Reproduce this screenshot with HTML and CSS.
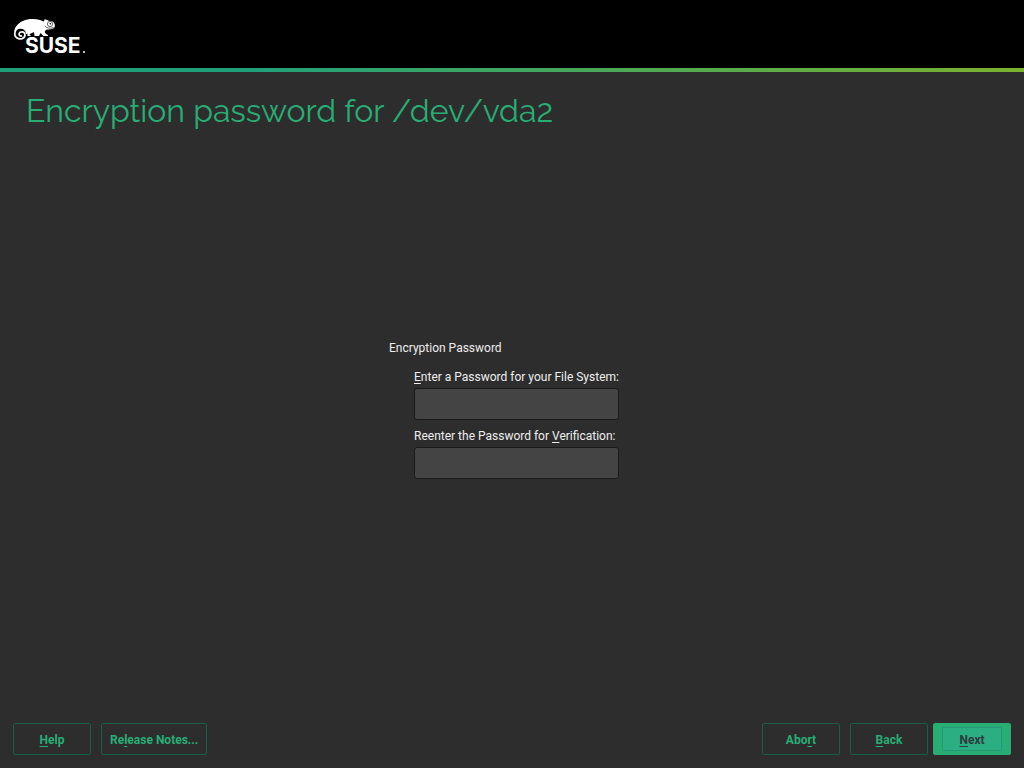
FILE: index.html
```html
<!DOCTYPE html>
<html lang="en">
<head>
<meta charset="utf-8">
<meta name="viewport" content="width=device-width, initial-scale=1">
<title>Encryption password for /dev/vda2</title>
<link rel="stylesheet" href="styles.css">
</head>
<body>
<header class="banner">
  <svg class="logo" width="76" height="38" viewBox="0 0 76 38" role="img" aria-label="SUSE">
    <path class="logo-shape" d="M0 16C0 9 4 5 9 3C14 0.500 21 0.500 26 2C28 2.500 29 3.500 30 3.500L30.500 1.300C32 1.500 33.500 2 34.500 2.800C37 2.800 39.500 3.500 40 5C41.200 6.500 41.200 8.500 40 10C38.500 11.300 35 11.500 33 11.500C30.500 12.500 30 14 32 16L34 17V18H29.500L26.500 15L25 18H20.500L20 14C18 15 16.500 15.500 15.500 16.500L17 18H13.500C14 14 12 11 8 10C3 9 0 13 0 16Z"/>
    <path class="logo-line" d="M13 16C12.500 11.500 9 9.500 6 10C0 10.500-0.500 18 3 20C6.500 22.300 11.300 20 11 16.500C10.500 13.200 6 13.300 5.200 15.500C4.600 17.500 6.600 18.600 8 17.500"/>
    <circle class="logo-eye" cx="36" cy="6" r="2.600"/>
    <circle class="logo-pupil" cx="36.300" cy="5.800" r="0.800"/>
    <path class="logo-mouth" d="M31 8C33 10.300 36 10.800 39.500 9.500"/>
    <text class="logo-text" x="11" y="35">SUSE</text>
    <circle class="logo-shape" cx="70" cy="34" r="1"/>
  </svg>
</header>
<form class="dialog">
  <h1 class="title">Encryption password for /dev/vda2</h1>
  <main class="content">
    <fieldset class="group">
      <legend class="legend">Encryption Password</legend>
      <div class="fields">
        <label class="label" for="password"><u>E</u>nter a Password for your File System:</label>
        <input class="input" id="password" type="password">
        <label class="label" for="verify">Reenter the Password for <u>V</u>erification:</label>
        <input class="input" id="verify" type="password">
      </div>
    </fieldset>
  </main>
  <footer class="actions">
    <div class="help-actions">
      <button class="button" type="button"><u>H</u>elp</button>
      <button class="button" type="button">Re<u>l</u>ease Notes...</button>
    </div>
    <div class="nav-actions">
      <button class="button" type="button">Abo<u>r</u>t</button>
      <div class="step-actions">
        <button class="button" type="button"><u>B</u>ack</button>
        <button class="button primary" type="submit"><span class="focus"><u>N</u>ext</span></button>
      </div>
    </div>
  </footer>
</form>
</body>
</html>
```
FILE: styles.css
```css
* { box-sizing: border-box; }
body {
  display: flex;
  flex-direction: column;
  min-height: 100vh;
  margin: 0;
  background: #2d2d2d;
  color: #eeeeee;
  font: 12px/16px Roboto, sans-serif;
}
u {
  text-decoration: underline 1px;
  text-underline-offset: 2px;
  text-decoration-skip-ink: none;
}
.banner {
  padding: 18px 14px 12px;
  background: #000;
  border-bottom: 4px solid;
  border-image: linear-gradient(to right, #21a179 0%, #21a179 25%, #7bb22f 100%) 1;
}
.logo { display: block; overflow: visible; }
.logo-shape { fill: #fff; }
.logo-line { fill: none; stroke: #fff; stroke-width: 1.7; }
.logo-eye { fill: #fff; stroke: #000; stroke-width: 0.6; }
.logo-pupil { fill: #000; }
.logo-mouth { fill: none; stroke: #000; stroke-width: 0.6; }
.logo-text {
  fill: #fff;
  stroke: #000;
  stroke-width: 2;
  paint-order: stroke;
  font: 700 21px Inter, sans-serif;
}
.dialog {
  display: flex;
  flex: 1;
  flex-direction: column;
}
.title {
  margin: 0;
  padding: 19px 26px;
  color: #28ae75;
  font: 400 32px/40px Raleway, Inter, sans-serif;
}
.content {
  display: flex;
  flex: 1;
  align-items: center;
  justify-content: center;
  padding-bottom: 38px;
}
.group {
  margin: 0;
  padding: 0 16px 16px 0;
  border: 0;
}
.legend { padding: 0; }
.fields {
  display: grid;
  padding: 13px 0 0 25px;
}
.label { margin-bottom: 3px; }
.input {
  width: 100%;
  height: 32px;
  padding: 4px 8px;
  border: 1px solid #1a1a1a;
  border-radius: 3px;
  background: #444;
  color: inherit;
  font: inherit;
}
.input:focus { outline: 1px solid #28ae75; }
.input + .label { margin-top: 8px; }
.actions {
  display: flex;
  flex-wrap: wrap;
  gap: 10px;
  justify-content: space-between;
  padding: 0 13px 13px;
}
.help-actions, .nav-actions { display: flex; gap: 10px; }
.step-actions { display: flex; gap: 5px; }
.button {
  min-width: 78px;
  height: 32px;
  padding: 2px 8px 0;
  border: 1px solid #175f47;
  border-radius: 2px;
  background: transparent;
  color: #28ae75;
  font: bold 12px/16px Roboto, sans-serif;
}
.primary {
  padding-top: 0;
  border-color: #28ae75;
  background: #28ae75;
  color: #2d3b3b;
}
.focus {
  display: block;
  padding: 4px 0 2px;
  border: 1px solid #289677;
  background: #2bae82;
}
```
